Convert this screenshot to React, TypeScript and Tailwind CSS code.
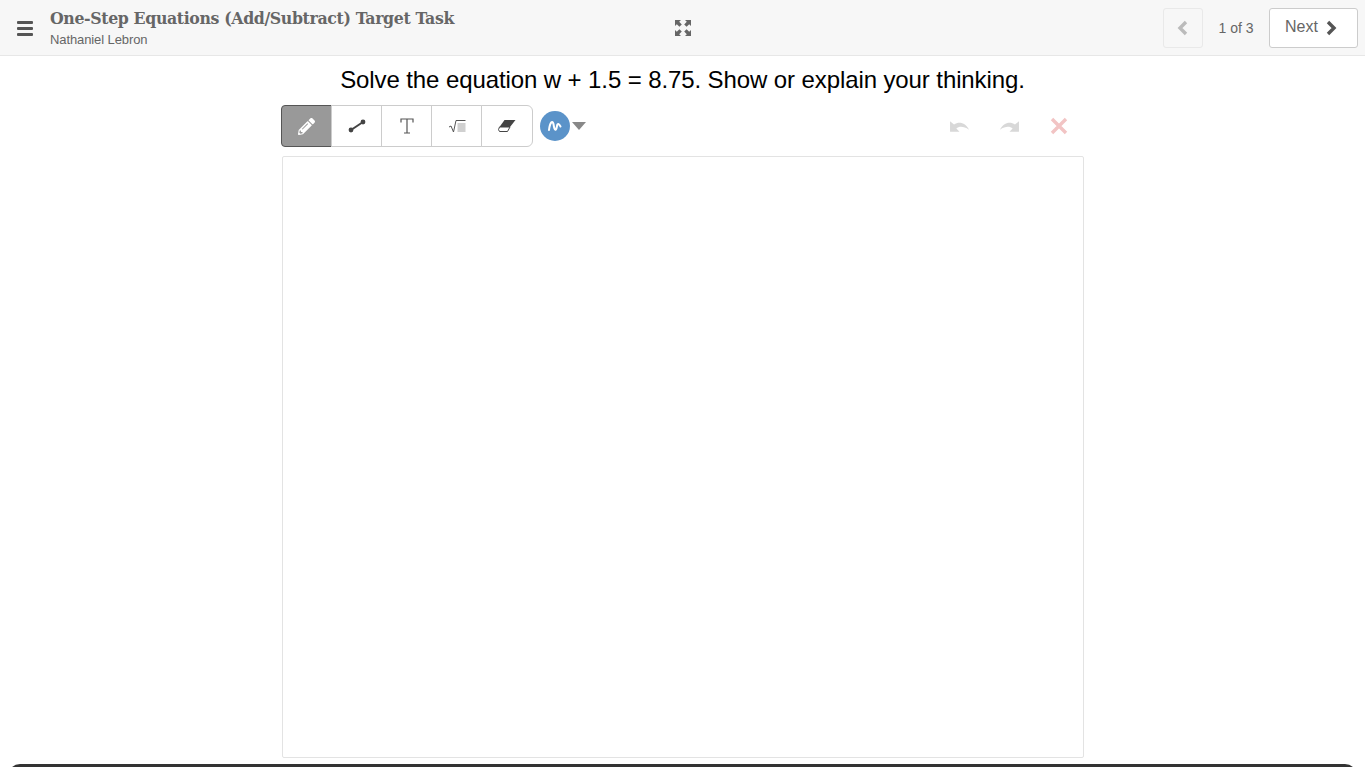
import { FaPencilAlt } from "react-icons/fa";

const sans = "font-['Liberation_Sans',Arial,sans-serif]";

function ToolButton({ active, children }: { active?: boolean; children: React.ReactNode }) {
  return (
    <div
      className={
        active
          ? "flex h-[42px] w-[51px] items-center justify-center rounded-l-[4px] border border-[#555] bg-[#999] text-white"
          : "-ml-px flex h-[42px] w-[51px] items-center justify-center border border-[#ccc] bg-white text-[#444] last:w-[52px] last:rounded-r-[6px]"
      }
    >
      {children}
    </div>
  );
}

function Chevron({ left, color }: { left?: boolean; color: string }) {
  return (
    <svg width="12" height="16" viewBox="0 0 12 16" className={left ? "-scale-x-100" : ""}>
      <path d="M3 2 L9 8 L3 14" fill="none" stroke={color} strokeWidth="3.4" />
    </svg>
  );
}

function ExpandIcon() {
  return (
    <svg width="18" height="18" viewBox="0 0 18 18" className="absolute left-[674px] top-[19px]">
      <g fill="#666">
        <path d="M1 1 H7 L5.2 2.8 L7.8 5.4 L5.4 7.8 L2.8 5.2 L1 7 Z" />
        <path d="M17 1 H11 L12.8 2.8 L10.2 5.4 L12.6 7.8 L15.2 5.2 L17 7 Z" />
        <path d="M1 17 H7 L5.2 15.2 L7.8 12.6 L5.4 10.2 L2.8 12.8 L1 11 Z" />
        <path d="M17 17 H11 L12.8 15.2 L10.2 12.6 L12.6 10.2 L15.2 12.8 L17 11 Z" />
      </g>
    </svg>
  );
}

function MenuIcon() {
  return (
    <div className="ml-[17px] mt-[1px] flex w-[16px] flex-col gap-[3px]">
      <div className="h-[3px] rounded-[1px] bg-[#555]" />
      <div className="h-[3px] rounded-[1px] bg-[#555]" />
      <div className="h-[3px] rounded-[1px] bg-[#555]" />
    </div>
  );
}

function LineIcon() {
  return (
    <svg width="18" height="14" viewBox="0 0 18 14" className="ml-px">
      <line x1="3" y1="11" x2="15" y2="3" stroke="#444" strokeWidth="2" />
      <circle cx="3" cy="11" r="2.4" fill="#444" />
      <circle cx="15" cy="3" r="2.4" fill="#444" />
    </svg>
  );
}

function TextIcon() {
  return (
    <svg width="14" height="16" viewBox="0 0 14 16" className="ml-px">
      <path d="M1 4.5 V1 H13 V4.5 M7 1 V15 M4 15 H10" fill="none" stroke="#555" strokeWidth="1.2" />
    </svg>
  );
}

function MathIcon() {
  return (
    <svg width="18" height="14" viewBox="0 0 18 14" className="ml-px">
      <path d="M1 8 L3 7 L5.5 13 L8 1.5 L17.5 1.5" fill="none" stroke="#555" strokeWidth="1" />
      <rect x="9.5" y="4" width="8" height="9" fill="#d0d0d0" />
    </svg>
  );
}

function EraserIcon() {
  return (
    <svg width="18" height="14" viewBox="0 0 18 14">
      <path d="M6.5 1 H17.5 L12 8 H1.5 Z" fill="#444" />
      <path d="M1.5 8 H12 L9.5 12.5 H1.5 Q-0.5 11 1.5 8 Z" fill="#fff" stroke="#444" strokeWidth="1" />
    </svg>
  );
}

function UndoIcon({ flip }: { flip?: boolean }) {
  return (
    <svg width="21" height="15" viewBox="0 0 20 14" className={flip ? "-scale-x-100" : ""}>
      <path d="M1 2 L1 12 L10 12 L7 9 C9.5 6.5 14 6.5 19 10 C16 4 10 1.5 4.8 5.2 Z" fill="#d8d8d8" />
    </svg>
  );
}

export default function App() {
  return (
    <div className={`flex h-screen flex-col overflow-hidden bg-white ${sans}`}>
      {/* header */}
      <header className="relative flex h-[56px] shrink-0 items-center border-b border-[#e7e7e7] bg-[#f7f7f7]">
        <MenuIcon />
        <div className="ml-[17px] flex flex-col">
          <div className="font-['DejaVu_Serif_Condensed','DejaVu_Serif',serif] text-[17.5px] font-bold leading-[22px] tracking-[-0.36px] text-[#666] font-stretch-condensed">
            One-Step Equations (Add/Subtract) Target Task
          </div>
          <div className="mt-[2px] text-[13px] leading-[18px] tracking-[-0.1px] text-[#666]">Nathaniel Lebron</div>
        </div>
        <ExpandIcon />
        <div className="ml-auto mr-[7px] flex items-center">
          <div className="flex h-[40px] w-[40px] items-center justify-center rounded-[3px] border border-[#e9e9e9]">
            <Chevron left color="#bbb" />
          </div>
          <div className="mt-[1px] w-[66px] text-center text-[14px] text-[#666]">1 of 3</div>
          <div className="flex h-[40px] w-[89px] items-center gap-[7px] rounded-[3px] border border-[#ccc] bg-white pl-[15px] text-[16px] text-[#666]">
            <span className="-mt-[2px]">Next</span>
            <Chevron color="#555" />
          </div>
        </div>
      </header>

      {/* question + canvas */}
      <main className="mx-auto flex w-[802px] flex-col">
        <h1 className="-mx-10 pt-[9px] text-center text-[24px] font-normal leading-[30px] tracking-[-0.1px] text-black">
          Solve the equation w + 1.5 = 8.75. Show or explain your thinking.
        </h1>
        <div className="-ml-px mt-[10px] flex h-[42px] items-center">
          <div className="flex">
            <ToolButton active>
              <FaPencilAlt className="h-[17px] w-[17px]" />
            </ToolButton>
            <ToolButton>
              <LineIcon />
            </ToolButton>
            <ToolButton>
              <TextIcon />
            </ToolButton>
            <ToolButton>
              <MathIcon />
            </ToolButton>
            <ToolButton>
              <EraserIcon />
            </ToolButton>
          </div>
          <div className="ml-[7px] flex h-[30px] w-[30px] items-center justify-center rounded-full bg-[#5b93c9]">
            <svg width="16" height="14" viewBox="0 0 16 14">
              <path d="M2 11 C3 3 5.5 1 6.5 5 C7.5 12 9 12.5 10 7 C10.5 4 12 4.5 13.5 7.5" fill="none" stroke="#fff" strokeWidth="2" strokeLinecap="round" />
            </svg>
          </div>
          <div className="ml-[2px] h-0 w-0 border-x-[7px] border-t-[8px] border-x-transparent border-t-[#888]" />
          <div className="ml-auto mr-[15px] flex items-center gap-[29px]">
            <UndoIcon />
            <UndoIcon flip />
            <svg width="20" height="20" viewBox="0 0 20 20">
              <path d="M3 3 L17 17 M17 3 L3 17" stroke="#f2c4c4" strokeWidth="3.4" />
            </svg>
          </div>
        </div>
        <div className="mt-[9px] h-[602px] rounded-[2px] border border-[#e3e3e3] bg-white" />
      </main>

      {/* player bar, cut off by the window */}
      <div className="mx-[8px] mt-[6px] h-[20px] shrink-0 rounded-t-[12px] bg-[#333]" />
    </div>
  );
}
